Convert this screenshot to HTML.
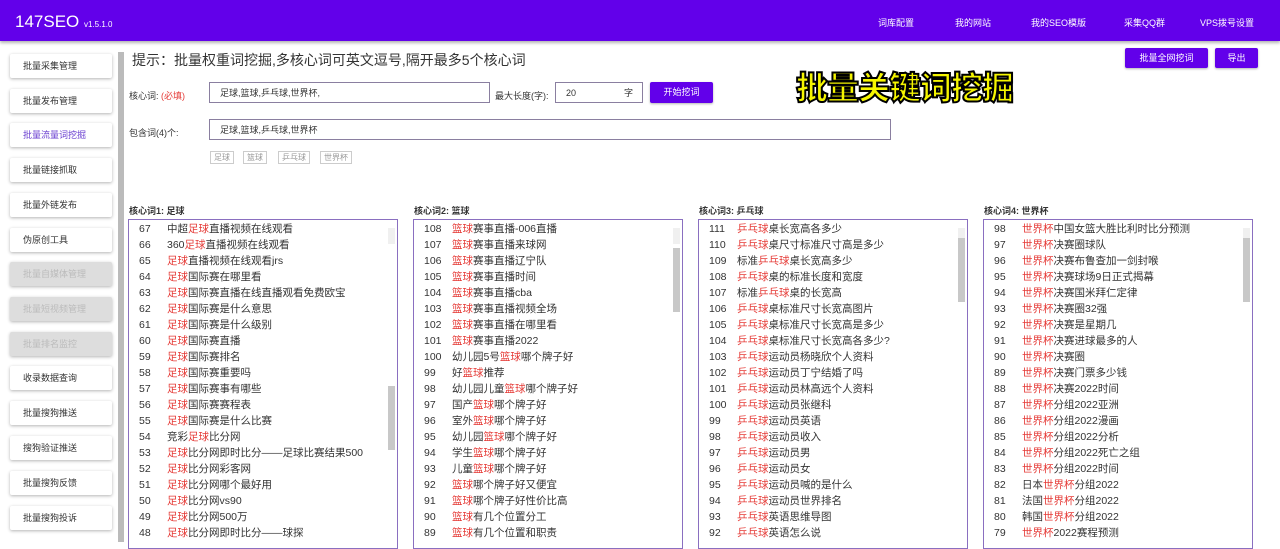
<!DOCTYPE html>
<html><head><meta charset="utf-8"><style>
*{box-sizing:border-box;margin:0;padding:0}
body{width:1280px;height:542px;overflow:hidden;background:#fff;font-family:"Liberation Sans","Noto Sans CJK SC",sans-serif;color:#333;position:relative}
.hd{position:absolute;left:0;top:0;width:1280px;height:41px;background:#6200ea;box-shadow:0 2px 3px rgba(0,0,0,.3)}
.logo{position:absolute;left:15px;top:12px;color:#fff;font-size:17px}
.logo small{font-size:8px}
.nav{position:absolute;top:16px;color:#fff;font-size:9px}
.sb{position:absolute;left:10px;width:102px;height:24px;background:#fff;box-shadow:0 1px 3px rgba(0,0,0,.3);font-size:9px;line-height:24px;padding-left:13px;color:#333;border-radius:2px}
.sb.dis{background:#ddd;color:#bbb}
.sc{position:absolute;left:118px;top:52px;width:6px;height:490px;background:#bbb}
.btn{position:absolute;background:#6200ea;color:#fff;font-size:9px;text-align:center;border-radius:2px;box-shadow:0 1px 2px rgba(0,0,0,.3)}
.inp{position:absolute;border:1px solid #8a7fa0;background:#fff;font-size:9px;padding-left:10px;line-height:20px}
.lbl{position:absolute;font-size:9px;color:#333}
.tag{position:absolute;top:151px;height:13px;border:1px solid #ccc;font-size:8px;color:#999;line-height:11px;padding:0 3px}
.ph{position:absolute;top:204px;font-size:9px;font-weight:bold}
.box{position:absolute;top:219px;width:270px;height:330px;border:1px solid #8a6fc0;overflow:hidden;font-size:10.5px;padding-top:1px}
.box div{height:16px;line-height:16px;white-space:nowrap}
.box b{font-weight:normal;display:inline-block;width:28px;margin-left:10px}
.box i{font-style:normal;color:#e53935}
.bs{position:absolute;right:2px;top:8px;width:7px;height:310px;background:#f0f0f0}
.bs span{position:absolute;left:0;width:7px;height:64px;background:#c8c8c8}
.big{position:absolute;left:796px;top:63px;font-size:32px;font-weight:900;color:#f5f500;-webkit-text-stroke:2px #000;letter-spacing:-1px;font-family:"Noto Sans CJK SC",sans-serif}
</style></head><body>
<div class="hd"><div class="logo">147SEO <small>v1.5.1.0</small></div>
<div class="nav" style="left:878px">词库配置</div><div class="nav" style="left:955px">我的网站</div><div class="nav" style="left:1031px">我的SEO模版</div><div class="nav" style="left:1124px">采集QQ群</div><div class="nav" style="left:1200px">VPS拨号设置</div></div>
<div class="sb" style="top:54px">批量采集管理</div>
<div class="sb" style="top:89px">批量发布管理</div>
<div class="sb" style="top:123px;color:#6a3fd0">批量流量词挖掘</div>
<div class="sb" style="top:158px">批量链接抓取</div>
<div class="sb" style="top:193px">批量外链发布</div>
<div class="sb" style="top:228px">伪原创工具</div>
<div class="sb dis" style="top:262px">批量自媒体管理</div>
<div class="sb dis" style="top:297px">批量短视频管理</div>
<div class="sb dis" style="top:332px">批量排名监控</div>
<div class="sb" style="top:366px">收录数据查询</div>
<div class="sb" style="top:401px">批量搜狗推送</div>
<div class="sb" style="top:436px">搜狗验证推送</div>
<div class="sb" style="top:471px">批量搜狗反馈</div>
<div class="sb" style="top:506px">批量搜狗投诉</div>
<div class="sc"></div>
<div class="lbl" style="left:132px;top:50px;font-size:14px">提示：批量权重词挖掘,多核心词可英文逗号,隔开最多5个核心词</div>
<div class="lbl" style="left:129px;top:89px">核心词: <span style="color:#e53935">(必填)</span></div>
<div class="inp" style="left:209px;top:82px;width:281px;height:21px">足球,篮球,乒乓球,世界杯,</div>
<div class="lbl" style="left:495px;top:89px">最大长度(字):</div>
<div class="inp" style="left:555px;top:82px;width:88px;height:21px">20<span style="position:absolute;left:68px">字</span></div>
<div class="btn" style="left:650px;top:82px;width:63px;height:21px;line-height:21px">开始挖词</div>
<div class="lbl" style="left:129px;top:126px">包含词(4)个:</div>
<div class="inp" style="left:209px;top:119px;width:682px;height:21px">足球,篮球,乒乓球,世界杯</div>
<div class="tag" style="left:210px">足球</div><div class="tag" style="left:243px">篮球</div><div class="tag" style="left:278px">乒乓球</div><div class="tag" style="left:320px">世界杯</div>
<div class="big">批量关键词挖掘</div>
<div class="btn" style="left:1125px;top:48px;width:83px;height:20px;line-height:20px">批量全网挖词</div>
<div class="btn" style="left:1215px;top:48px;width:43px;height:20px;line-height:20px">导出</div>
<div class="ph" style="left:129px">核心词1: 足球</div>
<div class="ph" style="left:414px">核心词2: 篮球</div>
<div class="ph" style="left:699px">核心词3: 乒乓球</div>
<div class="ph" style="left:984px">核心词4: 世界杯</div>
<div class="box" style="left:128px"><div><b>67</b>中超<i>足球</i>直播视频在线观看</div><div><b>66</b>360<i>足球</i>直播视频在线观看</div><div><b>65</b><i>足球</i>直播视频在线观看jrs</div><div><b>64</b><i>足球</i>国际赛在哪里看</div><div><b>63</b><i>足球</i>国际赛直播在线直播观看免费欧宝</div><div><b>62</b><i>足球</i>国际赛是什么意思</div><div><b>61</b><i>足球</i>国际赛是什么级别</div><div><b>60</b><i>足球</i>国际赛直播</div><div><b>59</b><i>足球</i>国际赛排名</div><div><b>58</b><i>足球</i>国际赛重要吗</div><div><b>57</b><i>足球</i>国际赛事有哪些</div><div><b>56</b><i>足球</i>国际赛赛程表</div><div><b>55</b><i>足球</i>国际赛是什么比赛</div><div><b>54</b>竞彩<i>足球</i>比分网</div><div><b>53</b><i>足球</i>比分网即时比分——足球比赛结果500</div><div><b>52</b><i>足球</i>比分网彩客网</div><div><b>51</b><i>足球</i>比分网哪个最好用</div><div><b>50</b><i>足球</i>比分网vs90</div><div><b>49</b><i>足球</i>比分网500万</div><div><b>48</b><i>足球</i>比分网即时比分——球探</div><div class="bs"><span style="top:158px"></span></div></div>
<div class="box" style="left:413px"><div><b>108</b><i>篮球</i>赛事直播-006直播</div><div><b>107</b><i>篮球</i>赛事直播来球网</div><div><b>106</b><i>篮球</i>赛事直播辽宁队</div><div><b>105</b><i>篮球</i>赛事直播时间</div><div><b>104</b><i>篮球</i>赛事直播cba</div><div><b>103</b><i>篮球</i>赛事直播视频全场</div><div><b>102</b><i>篮球</i>赛事直播在哪里看</div><div><b>101</b><i>篮球</i>赛事直播2022</div><div><b>100</b>幼儿园5号<i>篮球</i>哪个牌子好</div><div><b>99</b>好<i>篮球</i>推荐</div><div><b>98</b>幼儿园儿童<i>篮球</i>哪个牌子好</div><div><b>97</b>国产<i>篮球</i>哪个牌子好</div><div><b>96</b>室外<i>篮球</i>哪个牌子好</div><div><b>95</b>幼儿园<i>篮球</i>哪个牌子好</div><div><b>94</b>学生<i>篮球</i>哪个牌子好</div><div><b>93</b>儿童<i>篮球</i>哪个牌子好</div><div><b>92</b><i>篮球</i>哪个牌子好又便宜</div><div><b>91</b><i>篮球</i>哪个牌子好性价比高</div><div><b>90</b><i>篮球</i>有几个位置分工</div><div><b>89</b><i>篮球</i>有几个位置和职责</div><div class="bs"><span style="top:20px"></span></div></div>
<div class="box" style="left:698px"><div><b>111</b><i>乒乓球</i>桌长宽高各多少</div><div><b>110</b><i>乒乓球</i>桌尺寸标准尺寸高是多少</div><div><b>109</b>标准<i>乒乓球</i>桌长宽高多少</div><div><b>108</b><i>乒乓球</i>桌的标准长度和宽度</div><div><b>107</b>标准<i>乒乓球</i>桌的长宽高</div><div><b>106</b><i>乒乓球</i>桌标准尺寸长宽高图片</div><div><b>105</b><i>乒乓球</i>桌标准尺寸长宽高是多少</div><div><b>104</b><i>乒乓球</i>桌标准尺寸长宽高各多少?</div><div><b>103</b><i>乒乓球</i>运动员杨晓欣个人资料</div><div><b>102</b><i>乒乓球</i>运动员丁宁结婚了吗</div><div><b>101</b><i>乒乓球</i>运动员林高远个人资料</div><div><b>100</b><i>乒乓球</i>运动员张继科</div><div><b>99</b><i>乒乓球</i>运动员英语</div><div><b>98</b><i>乒乓球</i>运动员收入</div><div><b>97</b><i>乒乓球</i>运动员男</div><div><b>96</b><i>乒乓球</i>运动员女</div><div><b>95</b><i>乒乓球</i>运动员喊的是什么</div><div><b>94</b><i>乒乓球</i>运动员世界排名</div><div><b>93</b><i>乒乓球</i>英语思维导图</div><div><b>92</b><i>乒乓球</i>英语怎么说</div><div class="bs"><span style="top:10px"></span></div></div>
<div class="box" style="left:983px"><div><b>98</b><i>世界杯</i>中国女篮大胜比利时比分预测</div><div><b>97</b><i>世界杯</i>决赛圈球队</div><div><b>96</b><i>世界杯</i>决赛布鲁查加一剑封喉</div><div><b>95</b><i>世界杯</i>决赛球场9日正式揭幕</div><div><b>94</b><i>世界杯</i>决赛国米拜仁定律</div><div><b>93</b><i>世界杯</i>决赛圈32强</div><div><b>92</b><i>世界杯</i>决赛是星期几</div><div><b>91</b><i>世界杯</i>决赛进球最多的人</div><div><b>90</b><i>世界杯</i>决赛圈</div><div><b>89</b><i>世界杯</i>决赛门票多少钱</div><div><b>88</b><i>世界杯</i>决赛2022时间</div><div><b>87</b><i>世界杯</i>分组2022亚洲</div><div><b>86</b><i>世界杯</i>分组2022漫画</div><div><b>85</b><i>世界杯</i>分组2022分析</div><div><b>84</b><i>世界杯</i>分组2022死亡之组</div><div><b>83</b><i>世界杯</i>分组2022时间</div><div><b>82</b>日本<i>世界杯</i>分组2022</div><div><b>81</b>法国<i>世界杯</i>分组2022</div><div><b>80</b>韩国<i>世界杯</i>分组2022</div><div><b>79</b><i>世界杯</i>2022赛程预测</div><div class="bs"><span style="top:10px"></span></div></div>
</body></html>
